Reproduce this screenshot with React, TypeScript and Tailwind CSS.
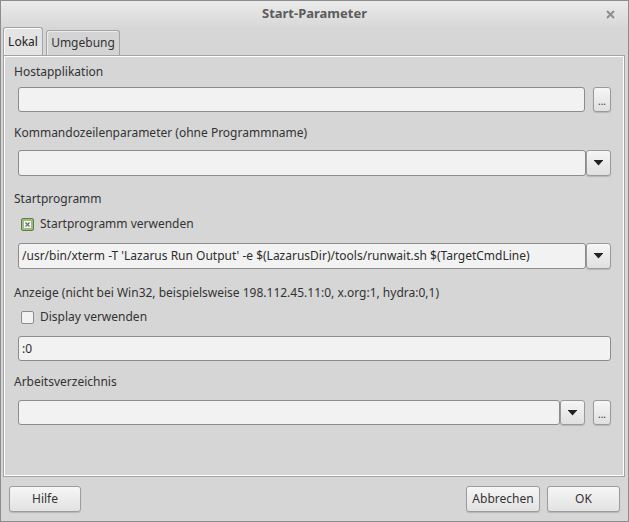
import React from "react";

const font = { fontFamily: '"Noto Sans", "Open Sans", sans-serif' };

function Arrow() {
  return (
    <svg width="9" height="6" viewBox="0 0 9 6">
      <rect x="0" y="0" width="9" height="1" fill="#222" />
      <polygon points="0.5,1 8.5,1 4.5,5.5" fill="#222" />
    </svg>
  );
}

function Input({ value, className = "" }: { value?: string; className?: string }) {
  return (
    <div
      className={`flex items-center bg-[#f2f2f2] border border-[#8c8c8c] rounded-[3px] px-[3px] text-[12px] text-[#2e2e2e] whitespace-nowrap overflow-hidden ${className}`}
    >
      {value}
    </div>
  );
}

function DropBtn({ className = "" }: { className?: string }) {
  return (
    <div
      className={`w-[25px] flex items-center justify-center bg-gradient-to-b from-[#f6f6f6] to-[#e0e0e0] border border-[#9a9a9a] rounded-[3px] shadow-[0_1px_1px_rgba(0,0,0,0.15)] ${className}`}
    >
      <Arrow />
    </div>
  );
}

function DotsBtn() {
  return (
    <div className="w-[18px] h-[25px] flex items-center justify-center bg-gradient-to-b from-[#f6f6f6] to-[#e0e0e0] border border-[#9a9a9a] rounded-[3px] shadow-[0_1px_1px_rgba(0,0,0,0.15)] text-[10px] text-[#333] leading-none pt-[2px]">
      ...
    </div>
  );
}

function Label({ text, className = "" }: { text: string; className?: string }) {
  return <div className={`h-[16px] leading-[16px] text-[12px] text-[#333] ${className}`}>{text}</div>;
}

function Button({ text, w }: { text: string; w: string }) {
  return (
    <div
      className={`${w} h-[26px] flex items-center justify-center bg-gradient-to-b from-[#f6f6f6] to-[#e2e2e2] border border-[#9c9c9c] rounded-[3px] shadow-[0_1px_1px_rgba(0,0,0,0.15)] text-[12px] text-[#333]`}
    >
      {text}
    </div>
  );
}

export default function App() {
  return (
    <div
      style={font}
      className="w-[629px] h-[522px] bg-[#d6d6d6] border border-[#8c8c8c] flex flex-col overflow-hidden"
    >
      {/* title bar */}
      <div className="h-[26px] shrink-0 grid grid-cols-[40px_1fr_40px] items-center bg-gradient-to-b from-[#ebebeb] to-[#d8d8d8]">
        <div />
        <div className="text-center text-[13px] font-bold text-[#5c5c5c]">Start-Parameter</div>
        <div className="flex justify-end pr-[13px]">
          <svg width="9" height="9" viewBox="0 0 9 9">
            <path d="M1 1L8 8M8 1L1 8" stroke="#8e8e8e" strokeWidth="2" />
          </svg>
        </div>
      </div>

      {/* tabs */}
      <div className="h-[28px] shrink-0 flex items-end pl-[2px] gap-[3px]">
        <div className="w-[40px] h-[28px] bg-[#e4e4e4] border border-[#a4a4a4] border-b-0 rounded-t-[3px] shadow-[inset_1px_1px_0_#fafafa] flex items-center justify-center text-[12px] text-[#222]">
          Lokal
        </div>
        <div className="w-[74px] h-[25px] bg-[#d4d4d4] border border-[#a4a4a4] border-b-0 rounded-t-[3px] shadow-[inset_1px_1px_0_#ececec] flex items-center justify-center text-[12px] text-[#333]">
          Umgebung
        </div>
      </div>

      {/* panel */}
      <div className="ml-[2px] mr-[3px] h-[422px] shrink-0 border border-[#a4a4a4] shadow-[inset_1px_1px_0_#ffffff,inset_-1px_-1px_0_#ffffff] pl-[10px] pr-[13px] flex flex-col">
        <Label text="Hostapplikation" className="mt-[8px]" />
        <div className="mt-[7px] ml-[4px] flex gap-[8px]">
          <Input className="flex-1 h-[25px]" />
          <DotsBtn />
        </div>

        <Label text="Kommandozeilenparameter (ohne Programmname)" className="mt-[13px]" />
        <div className="mt-[9px] ml-[4px] flex h-[26px]">
          <Input className="flex-1 h-[26px]" />
          <DropBtn className="h-[26px]" />
        </div>

        <Label text="Startprogramm" className="mt-[15px]" />
        <div className="mt-[9px] ml-[7px] h-[16px] flex items-center gap-[6px]">
          <div className="w-[13px] h-[13px] rounded-[2px] border border-[#5f7f45] bg-[#9dbd7f] flex items-center justify-center">
            <div className="w-[7px] h-[7px] bg-[#f4f4f4] flex items-center justify-center">
              <svg width="5" height="5" viewBox="0 0 5 5">
                <path d="M0.5 0.5L4.5 4.5M4.5 0.5L0.5 4.5" stroke="#6a6a6a" strokeWidth="1.2" />
              </svg>
            </div>
          </div>
          <span className="text-[12px] text-[#333]">Startprogramm verwenden</span>
        </div>
        <div className="mt-[11px] ml-[4px] flex h-[26px]">
          <Input
            className="flex-1 h-[26px]"
            value="/usr/bin/xterm -T 'Lazarus Run Output' -e $(LazarusDir)/tools/runwait.sh $(TargetCmdLine)"
          />
          <DropBtn className="h-[26px]" />
        </div>

        <Label text="Anzeige (nicht bei Win32, beispielsweise 198.112.45.11:0, x.org:1, hydra:0,1)" className="mt-[16px]" />
        <div className="mt-[8px] ml-[7px] h-[16px] flex items-center gap-[6px]">
          <div className="w-[13px] h-[13px] rounded-[2px] border border-[#8c8c8c] bg-[#f2f2f2]" />
          <span className="text-[12px] text-[#333]">Display verwenden</span>
        </div>
        <Input className="mt-[11px] ml-[4px] h-[25px]" value=":0" />

        <Label text="Arbeitsverzeichnis" className="mt-[13px]" />
        <div className="mt-[10px] ml-[4px] flex gap-[8px]">
          <div className="flex-1 flex h-[25px]">
            <Input className="flex-1 h-[25px]" />
            <DropBtn className="h-[25px]" />
          </div>
          <DotsBtn />
        </div>
      </div>

      {/* buttons */}
      <div className="mt-[9px] px-[8px] flex items-center">
        <Button text="Hilfe" w="w-[72px]" />
        <div className="flex-1" />
        <div className="flex gap-[7px]">
          <Button text="Abbrechen" w="w-[74px]" />
          <Button text="OK" w="w-[73px]" />
        </div>
      </div>
    </div>
  );
}
